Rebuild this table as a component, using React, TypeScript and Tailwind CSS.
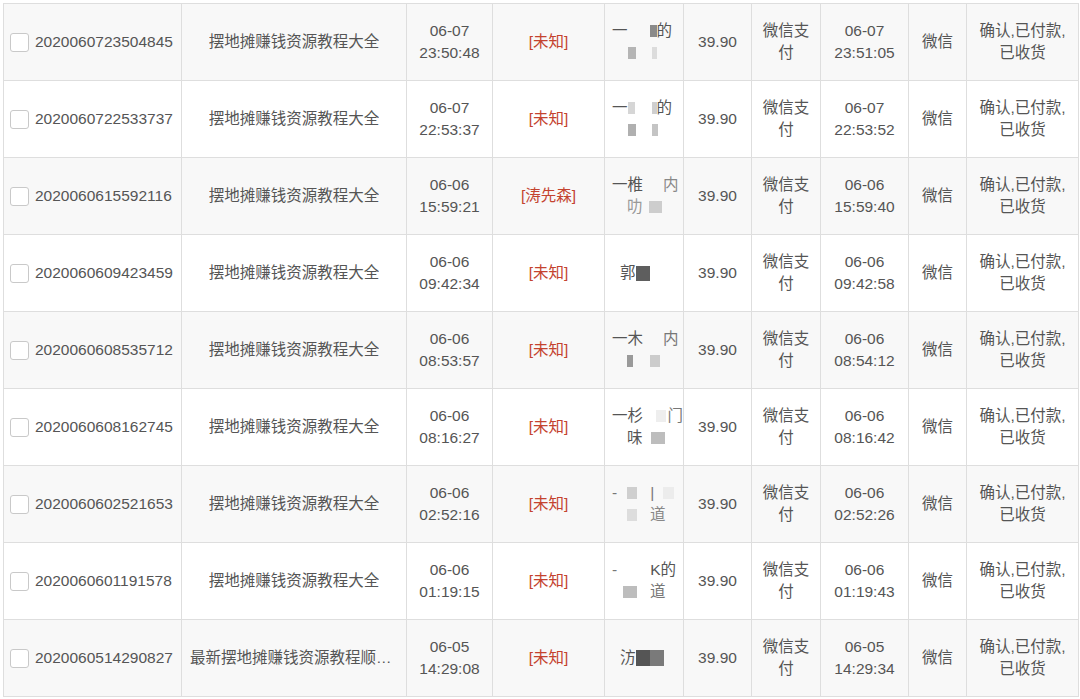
import type { ReactNode } from "react";

const font = { fontFamily: '"Liberation Sans", "Noto Sans CJK SC", sans-serif' };

type Order = {
  no: string;
  product: string;
  created: [string, string];
  status: string;
  buyer: ReactNode;
  paid: [string, string];
};

function Blk({ w, c, h = "h-[12px]" }: { w: string; c: string; h?: string }) {
  return <span className={`inline-block align-middle ${w} ${h} ${c}`} />;
}

function Gap({ w }: { w: string }) {
  return <span className={`inline-block ${w}`} />;
}

function Line({ children }: { children: ReactNode }) {
  return <div className="flex h-[22px] items-center whitespace-nowrap">{children}</div>;
}

// buyer names are mosaicked in the screenshot, so only fragments + grey blocks
const orders: Order[] = [
  {
    no: "2020060723504845",
    product: "摆地摊赚钱资源教程大全",
    created: ["06-07", "23:50:48"],
    status: "[未知]",
    buyer: (
      <>
        <Line>
          一<Gap w="w-[22px]" />
          <Blk w="w-[7px]" c="bg-[#8a8a8a]" />的
        </Line>
        <Line>
          <Gap w="w-[16px]" />
          <Blk w="w-[8px]" c="bg-[#b5b5b5]" />
          <Gap w="w-[16px]" />
          <Blk w="w-[5px]" c="bg-[#dcdcdc]" />
        </Line>
      </>
    ),
    paid: ["06-07", "23:51:05"],
  },
  {
    no: "2020060722533737",
    product: "摆地摊赚钱资源教程大全",
    created: ["06-07", "22:53:37"],
    status: "[未知]",
    buyer: (
      <>
        <Line>
          一<Blk w="w-[7px]" c="bg-[#d6d6d6]" />
          <Gap w="w-[17px]" />
          <Blk w="w-[5px]" c="bg-[#cfcfcf]" />的
        </Line>
        <Line>
          <Gap w="w-[16px]" />
          <Blk w="w-[8px]" c="bg-[#b0b0b0]" />
          <Gap w="w-[16px]" />
          <Blk w="w-[6px]" c="bg-[#c4c4c4]" />
        </Line>
      </>
    ),
    paid: ["06-07", "22:53:52"],
  },
  {
    no: "2020060615592116",
    product: "摆地摊赚钱资源教程大全",
    created: ["06-06", "15:59:21"],
    status: "[涛先森]",
    buyer: (
      <>
        <Line>
          一椎<Gap w="w-[20px]" />
          <span className="text-[#888]">内</span>
        </Line>
        <Line>
          <Gap w="w-[15px]" />
          <span className="text-[#999]">叻</span>
          <Gap w="w-[6px]" />
          <Blk w="w-[13px]" c="bg-[#cdcdcd]" />
        </Line>
      </>
    ),
    paid: ["06-06", "15:59:40"],
  },
  {
    no: "2020060609423459",
    product: "摆地摊赚钱资源教程大全",
    created: ["06-06", "09:42:34"],
    status: "[未知]",
    buyer: (
      <Line>
        <Gap w="w-[8px]" />郭
        <Blk w="w-[14px]" h="h-[15px]" c="bg-[#5e5e5e]" />
      </Line>
    ),
    paid: ["06-06", "09:42:58"],
  },
  {
    no: "2020060608535712",
    product: "摆地摊赚钱资源教程大全",
    created: ["06-06", "08:53:57"],
    status: "[未知]",
    buyer: (
      <>
        <Line>
          一木<Gap w="w-[20px]" />
          <span className="text-[#777]">内</span>
        </Line>
        <Line>
          <Gap w="w-[15px]" />
          <Blk w="w-[6px]" c="bg-[#9a9a9a]" />
          <Gap w="w-[17px]" />
          <Blk w="w-[10px]" c="bg-[#cccccc]" />
        </Line>
      </>
    ),
    paid: ["06-06", "08:54:12"],
  },
  {
    no: "2020060608162745",
    product: "摆地摊赚钱资源教程大全",
    created: ["06-06", "08:16:27"],
    status: "[未知]",
    buyer: (
      <>
        <Line>
          一杉<Gap w="w-[14px]" />
          <Blk w="w-[10px]" c="bg-[#eeeeee]" />
          <Gap w="w-[2px]" />
          <span className="text-[#777]">门</span>
        </Line>
        <Line>
          <Gap w="w-[15px]" />
          味<Gap w="w-[8px]" />
          <Blk w="w-[14px]" c="bg-[#bdbdbd]" />
        </Line>
      </>
    ),
    paid: ["06-06", "08:16:42"],
  },
  {
    no: "2020060602521653",
    product: "摆地摊赚钱资源教程大全",
    created: ["06-06", "02:52:16"],
    status: "[未知]",
    buyer: (
      <>
        <Line>
          <span className="text-[#777]">-</span>
          <Gap w="w-[10px]" />
          <Blk w="w-[10px]" c="bg-[#cfcfcf]" />
          <Gap w="w-[13px]" />
          <span className="text-[#777]">|</span>
          <Gap w="w-[9px]" />
          <Blk w="w-[11px]" c="bg-[#ececec]" />
        </Line>
        <Line>
          <Gap w="w-[15px]" />
          <Blk w="w-[10px]" c="bg-[#dddddd]" />
          <Gap w="w-[13px]" />
          <span className="text-[#888]">道</span>
        </Line>
      </>
    ),
    paid: ["06-06", "02:52:26"],
  },
  {
    no: "2020060601191578",
    product: "摆地摊赚钱资源教程大全",
    created: ["06-06", "01:19:15"],
    status: "[未知]",
    buyer: (
      <>
        <Line>
          <span className="text-[#777]">-</span>
          <Gap w="w-[33px]" />K的
        </Line>
        <Line>
          <Gap w="w-[11px]" />
          <Blk w="w-[14px]" c="bg-[#bdbdbd]" />
          <Gap w="w-[13px]" />
          <span className="text-[#777]">道</span>
        </Line>
      </>
    ),
    paid: ["06-06", "01:19:43"],
  },
  {
    no: "2020060514290827",
    product: "最新摆地摊赚钱资源教程顺序整理合集",
    created: ["06-05", "14:29:08"],
    status: "[未知]",
    buyer: (
      <Line>
        <Gap w="w-[8px]" />汸
        <Blk w="w-[14px]" h="h-[16px]" c="bg-[#555555]" />
        <Blk w="w-[14px]" h="h-[16px]" c="bg-[#7a7a7a]" />
      </Line>
    ),
    paid: ["06-05", "14:29:34"],
  },
];

function Checkbox() {
  return (
    <span className="inline-block h-[19px] w-[19px] shrink-0 rounded-[3px] border border-[#c9c9c9] bg-white" />
  );
}

function TwoLine({ a, b }: { a: string; b: string }) {
  return (
    <>
      <span className="block h-[22px] leading-[22px]">{a}</span>
      <span className="block h-[22px] leading-[22px]">{b}</span>
    </>
  );
}

export default function App() {
  return (
    <div className="min-h-screen bg-white pt-[3px] text-[15.5px] text-[#555]" style={font}>
      <div className="ml-[3px] w-[1076px] border-l border-t border-[#dedede]">
        {orders.map((o, i) => (
          <div
            key={o.no}
            className={`flex h-[77px] border-b border-[#dedede] ${i % 2 === 0 ? "bg-[#f8f8f8]" : "bg-white"}`}
          >
            <div className="flex w-[178px] items-center gap-[6px] border-r border-[#dedede] pl-[6px]">
              <Checkbox />
              <span>{o.no}</span>
            </div>
            <div className="flex w-[225px] items-center justify-center border-r border-[#dedede] px-[8px]">
              <span className="truncate">{o.product}</span>
            </div>
            <div className="flex w-[86px] flex-col items-center justify-center border-r border-[#dedede]">
              <TwoLine a={o.created[0]} b={o.created[1]} />
            </div>
            <div className="flex w-[112px] items-center justify-center border-r border-[#dedede] text-[#c4432f]">
              {o.status}
            </div>
            <div className="flex w-[79px] flex-col justify-center border-r border-[#dedede] pl-[7px]">
              {o.buyer}
            </div>
            <div className="flex w-[68px] items-center justify-center border-r border-[#dedede]">39.90</div>
            <div className="flex w-[69px] flex-col items-center justify-center border-r border-[#dedede]">
              <TwoLine a="微信支" b="付" />
            </div>
            <div className="flex w-[88px] flex-col items-center justify-center border-r border-[#dedede]">
              <TwoLine a={o.paid[0]} b={o.paid[1]} />
            </div>
            <div className="flex w-[58px] items-center justify-center border-r border-[#dedede]">微信</div>
            <div className="flex w-[112px] flex-col items-center justify-center border-r border-[#dedede]">
              <TwoLine a="确认,已付款," b="已收货" />
            </div>
          </div>
        ))}
      </div>
    </div>
  );
}
